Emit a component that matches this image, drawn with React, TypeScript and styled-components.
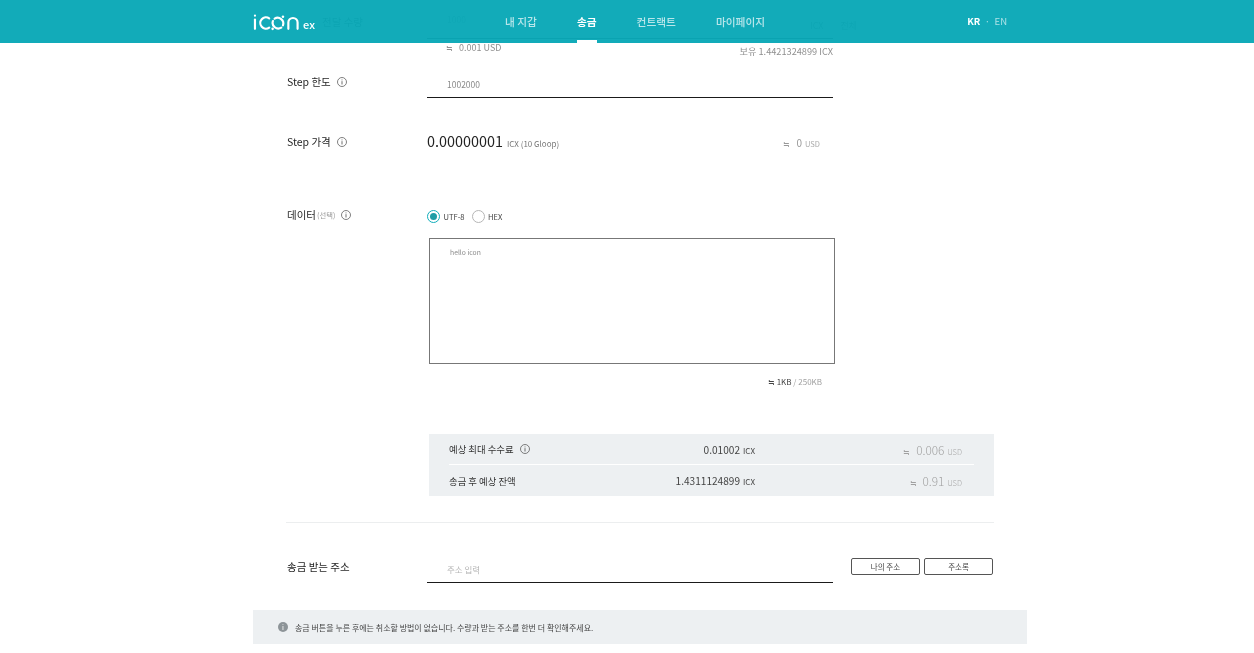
import React from "react";
import styled, { createGlobalStyle } from "styled-components";

const GlobalStyle = createGlobalStyle`
  html, body {
    margin: 0;
    padding: 0;
    height: 100%;
    overflow: hidden;
    background: #fff;
  }
  * {
    box-sizing: border-box;
  }
  body {
    font-family: "Noto Sans CJK KR", "Noto Sans", sans-serif;
    color: #262626;
  }
`;

const InfoIcon = ({ size = 10 }: { size?: number }) => (
  <svg width={size} height={size} viewBox="0 0 12 12" fill="none">
    <circle cx="6" cy="6" r="5.4" stroke="#555" strokeWidth="0.9" />
    <rect x="5.5" y="5" width="1" height="4" fill="#555" />
    <rect x="5.5" y="3" width="1" height="1" fill="#555" />
  </svg>
);

const Logo = () => (
  <svg width="50" height="18" viewBox="0 0 50 18" fill="none">
    <g stroke="#fff" strokeWidth="2.2" strokeLinecap="round">
      <path d="M2 6.5V16" />
      <path d="M2 2.4V2.6" />
      <path d="M16.5 5.2A5.8 5.8 0 1 0 16.5 14.8" />
      <path d="M22 5.6A5.8 5.8 0 0 1 30.5 12.5" />
      <path d="M28.8 14.8A5.8 5.8 0 0 1 20.3 8" />
      <path d="M36 16V9.6A4.7 4.7 0 0 1 45.4 9.6V16" />
    </g>
    <circle cx="30.5" cy="3.6" r="1.3" fill="#fff" />
    <circle cx="20" cy="16" r="1.3" fill="#fff" />
  </svg>
);

const Page = styled.div`
  position: relative;
  width: 1280px;
  height: 653px;
  overflow: hidden;
`;

const Header = styled.header`
  position: absolute;
  top: 0;
  left: 0;
  right: 0;
  height: 43px;
  background: rgba(10, 168, 183, 0.97);
  z-index: 2;
`;

const HeaderInner = styled.div`
  width: 774px;
  height: 100%;
  margin: 0 auto;
  display: flex;
  align-items: center;
  padding-right: 20px;
`;

const Brand = styled.div`
  display: flex;
  align-items: flex-end;
  width: 62px;
  color: #fff;
`;

const BrandSuffix = styled.span`
  font-size: 11px;
  line-height: 13px;
  font-weight: 500;
  margin-left: 1px;
`;

const Nav = styled.nav`
  display: flex;
  gap: 40px;
  margin-left: 190px;
  height: 100%;
`;

const NavItem = styled.a<{ $active?: boolean }>`
  display: flex;
  align-items: center;
  height: 100%;
  padding: 3px 0 0;
  font-size: 10.7px;
  font-weight: ${(p) => (p.$active ? 700 : 500)};
  color: ${(p) => (p.$active ? "#fff" : "rgba(255, 255, 255, 0.7)")};
  border-bottom: 3px solid ${(p) => (p.$active ? "#fff" : "transparent")};
`;

const Lang = styled.div`
  display: flex;
  align-items: center;
  gap: 4.5px;
  margin-left: auto;
  padding-bottom: 1px;
  font-size: 9.5px;
  color: rgba(255, 255, 255, 0.65);
`;

const LangActive = styled.span`
  color: #fff;
  font-weight: 700;
`;

const Content = styled.main`
  width: 774px;
  margin: 0 auto;
  display: flex;
  flex-direction: column;
  will-change: transform;
`;

const Form = styled.section`
  padding: 0 33px;
`;

const Row = styled.div<{ $height: number }>`
  display: grid;
  grid-template-columns: 141px 1fr;
  height: ${(p) => p.$height}px;
`;

const Label = styled.div<{ $top: number; $indent?: number }>`
  display: flex;
  align-items: center;
  gap: 6px;
  height: 16px;
  margin-top: ${(p) => p.$top}px;
  padding-left: ${(p) => p.$indent ?? 1}px;
  font-size: 10.5px;
  color: #262626;
  line-height: 16px;
`;

const LabelHint = styled.span`
  font-size: 7.3px;
  color: #999;
  margin-left: -5px;
`;

const Field = styled.div`
  width: 406px;
  flex-shrink: 0;
`;

const InputLine = styled.div<{ $top: number; $height: number; $placeholder?: boolean }>`
  height: ${(p) => p.$height}px;
  margin-top: ${(p) => p.$top}px;
  padding: 0 0 ${(p) => (p.$placeholder ? 4 : 0)}px 20px;
  display: flex;
  align-items: center;
  border-bottom: 1px solid #1a1a1a;
  font-size: 8.5px;
  color: ${(p) => (p.$placeholder ? "#b5b5b5" : "#8a8a8a")};
`;

const GhostButton = styled.span`
  position: absolute;
  top: 19px;
  left: 557px;
  font-size: 9px;
  word-spacing: 15px;
  color: #555;
`;

const SubLine = styled.div`
  display: flex;
  justify-content: space-between;
  height: 12px;
  margin-top: 3px;
  line-height: 12px;
  padding-left: 19px;
  font-size: 9px;
  color: #8f8f8f;
`;

const Holding = styled.span`
  margin-top: 3px;
  font-size: 9.2px;
`;

const Approx = styled.span`
  margin-right: 6px;
  font-size: 8px;
`;

const PriceRow = styled.div`
  display: flex;
  align-items: baseline;
  padding-top: 16px;
  padding-right: 13px;
`;

const PriceValue = styled.span`
  font-size: 14.4px;
  line-height: 20px;
  color: #222;
`;

const PriceUnit = styled.span`
  margin-left: 4px;
  font-size: 8px;
  color: #777;
`;

const PriceUsd = styled.span`
  margin-left: auto;
  font-size: 10px;
  color: #999;
`;

const SmallUnit = styled.small`
  margin-left: 3px;
  font-size: 7.5px;
  color: #aaa;
`;

const RadioGroup = styled.div`
  display: flex;
  align-items: center;
  height: 14px;
  margin-top: 34px;
`;

const RadioDot = styled.span<{ $checked?: boolean }>`
  width: 13px;
  height: 13px;
  border-radius: 50%;
  display: flex;
  align-items: center;
  justify-content: center;
  border: 1px solid ${(p) => (p.$checked ? "#0eacba" : "#b5b5b5")};

  &::after {
    content: "";
    width: 7px;
    height: 7px;
    border-radius: 50%;
    background: ${(p) => (p.$checked ? "#1f9da6" : "transparent")};
  }
`;

const RadioText = styled.span`
  margin: 0 7px 0 3.5px;
  font-size: 7.6px;
  color: #444;
`;

const TextBox = styled.div`
  width: 406px;
  height: 126px;
  margin: 15px 0 0 2px;
  padding: 7px 20px;
  border: 1px solid #777;
  font-size: 6.8px;
  line-height: 12px;
  color: #8a8a8a;
`;

const Counter = styled.div`
  width: 395px;
  margin-top: 12px;
  text-align: right;
  font-size: 8px;
  line-height: 12px;
  color: #a0a0a0;
`;

const CounterStrong = styled.span`
  color: #444;
`;

const FeeBox = styled.div`
  width: 565px;
  height: 62px;
  margin: 50px 0 0 143px;
  padding: 0 20px;
  background: #edf0f2;
`;

const FeeRow = styled.div<{ $last?: boolean }>`
  display: grid;
  grid-template-columns: 175px 131px 1fr;
  align-items: center;
  height: 31px;
  border-bottom: ${(p) => (p.$last ? "none" : "1px solid #fff")};
`;

const FeeLabel = styled.div`
  display: flex;
  align-items: center;
  gap: 6px;
  font-size: 9.4px;
  color: #333;
`;

const FeeValue = styled.div`
  text-align: right;
  font-size: 10.1px;
  color: #444;
`;

const FeeUnit = styled.span`
  margin-left: 3px;
  font-size: 8px;
`;

const FeeUsd = styled.div`
  text-align: right;
  padding-right: 12px;
  font-size: 11.8px;
  font-weight: 300;
  color: #a0a0a0;
`;

const Rule = styled.hr`
  width: 708px;
  height: 1px;
  margin: 26px 0 0;
  border: 0;
  background: #eceeef;
`;

const AddressRow = styled.div`
  display: flex;
  height: 60px;
`;

const AddressLabel = styled(Label)`
  width: 141px;
`;

const ButtonGroup = styled.div`
  display: flex;
  gap: 4px;
  margin: 35px 0 0 18px;
`;

const OutlineButton = styled.button`
  width: 69px;
  height: 17px;
  padding: 0;
  border: 1px solid #555;
  border-radius: 2px;
  background: #fff;
  font-family: inherit;
  font-size: 7.5px;
  color: #444;
`;

const Notice = styled.div`
  display: flex;
  align-items: center;
  gap: 7px;
  height: 34px;
  margin-top: 27px;
  padding-left: 25px;
  background: #edf0f2;
  font-size: 8px;
  color: #444;
`;

const NoticeDot = styled.span`
  width: 10px;
  height: 10px;
  border-radius: 50%;
  background: #8d9498;
  color: #fff;
  display: flex;
  align-items: center;
  justify-content: center;
  font-size: 7px;
  line-height: 1;
`;

export default function App() {
  return (
    <Page>
      <GlobalStyle />
      <Header>
        <HeaderInner>
          <Brand>
            <Logo />
            <BrandSuffix>ex</BrandSuffix>
          </Brand>
          <Nav>
            <NavItem>내 지갑</NavItem>
            <NavItem $active>송금</NavItem>
            <NavItem>컨트랙트</NavItem>
            <NavItem>마이페이지</NavItem>
          </Nav>
          <Lang>
            <LangActive>KR</LangActive>
            <span>·</span>
            <span>EN</span>
          </Lang>
        </HeaderInner>
      </Header>
      <Content>
        <Form>
          <Row $height={54}>
            <Label $top={14} $indent={36}>전달 수량</Label>
            <Field>
              <InputLine $top={0} $height={39}>1000</InputLine>
              <SubLine>
                <span>
                  <Approx>≒</Approx>0.001 USD
                </span>
                <Holding>보유 1.4421324899 ICX</Holding>
              </SubLine>
            </Field>
          </Row>
          <GhostButton>ICX 전체</GhostButton>
          <Row $height={61}>
            <Label $top={20}>
              Step 한도 <InfoIcon />
            </Label>
            <Field>
              <InputLine $top={16} $height={28}>1002000</InputLine>
            </Field>
          </Row>
          <Row $height={60}>
            <Label $top={19}>
              Step 가격 <InfoIcon />
            </Label>
            <Field>
              <PriceRow>
                <PriceValue>0.00000001</PriceValue>
                <PriceUnit>ICX (10 Gloop)</PriceUnit>
                <PriceUsd>
                  <Approx>≒</Approx>0<SmallUnit>USD</SmallUnit>
                </PriceUsd>
              </PriceRow>
            </Field>
          </Row>
          <Row $height={209}>
            <Label $top={32}>
              데이터<LabelHint>(선택)</LabelHint> <InfoIcon />
            </Label>
            <Field>
              <RadioGroup>
                <RadioDot $checked />
                <RadioText>UTF-8</RadioText>
                <RadioDot />
                <RadioText>HEX</RadioText>
              </RadioGroup>
              <TextBox>hello icon</TextBox>
              <Counter>
                <CounterStrong>≒ 1KB</CounterStrong> / 250KB
              </Counter>
            </Field>
          </Row>
          <FeeBox>
            <FeeRow>
              <FeeLabel>
                예상 최대 수수료 <InfoIcon />
              </FeeLabel>
              <FeeValue>
                0.01002<FeeUnit>ICX</FeeUnit>
              </FeeValue>
              <FeeUsd>
                <Approx>≒</Approx>0.006<SmallUnit>USD</SmallUnit>
              </FeeUsd>
            </FeeRow>
            <FeeRow $last>
              <FeeLabel>송금 후 예상 잔액</FeeLabel>
              <FeeValue>
                1.4311124899<FeeUnit>ICX</FeeUnit>
              </FeeValue>
              <FeeUsd>
                <Approx>≒</Approx>0.91<SmallUnit>USD</SmallUnit>
              </FeeUsd>
            </FeeRow>
          </FeeBox>
          <Rule />
          <AddressRow>
            <AddressLabel $top={36}>송금 받는 주소</AddressLabel>
            <Field>
              <InputLine $top={37} $height={23} $placeholder>주소 입력</InputLine>
            </Field>
            <ButtonGroup>
              <OutlineButton>나의 주소</OutlineButton>
              <OutlineButton>주소록</OutlineButton>
            </ButtonGroup>
          </AddressRow>
        </Form>
        <Notice>
          <NoticeDot>i</NoticeDot>
          송금 버튼을 누른 후에는 취소할 방법이 없습니다. 수량과 받는 주소를 한번 더 확인해주세요.
        </Notice>
      </Content>
    </Page>
  );
}
